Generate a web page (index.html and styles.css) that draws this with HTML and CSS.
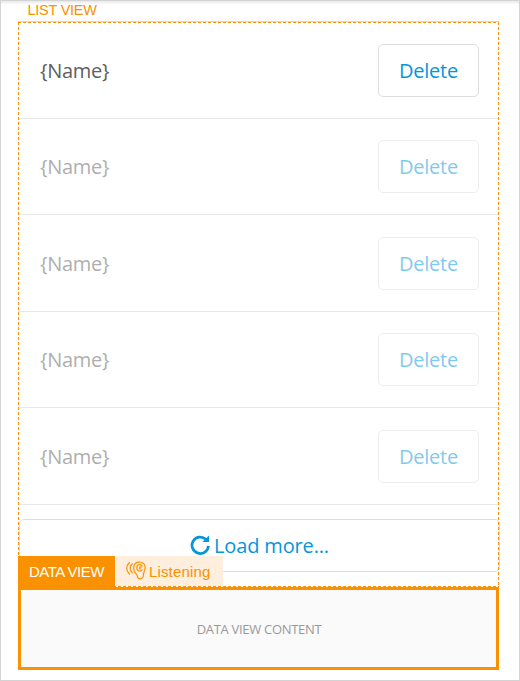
FILE: index.html
```html
<!DOCTYPE html>
<html lang="en">
<head>
<meta charset="utf-8">
<title>List view</title>
<link rel="stylesheet" href="styles.css">
</head>
<body>
<main class="canvas">
  <div class="list-label"><span>LIST VIEW</span></div>
  <section class="list-view">
    <div class="row"><span class="name">{Name}</span><button class="btn">Delete</button></div>
    <div class="row short faded"><span class="name">{Name}</span><button class="btn">Delete</button></div>
    <div class="row faded"><span class="name">{Name}</span><button class="btn">Delete</button></div>
    <div class="row short faded"><span class="name">{Name}</span><button class="btn">Delete</button></div>
    <div class="row faded"><span class="name">{Name}</span><button class="btn">Delete</button></div>
    <button class="btn load-more">
      <svg class="refresh" viewBox="0 0 20 20" width="20" height="20"><path d="M15.8 4.3A8.2 8.2 0 1 0 18.4 10.8" fill="none" stroke="#0595db" stroke-width="2.7"/><path d="M19 .6V7H12.4Z" fill="#0595db"/></svg>
      <span class="load-text">Load more...</span>
    </button>
    <svg class="outline" width="481" height="565" viewBox="0 0 481 565"><path d="M0 .5H481M.5 0V565M480.5 0V565M0 564.5H481" fill="none" stroke="#f99100" stroke-dasharray="3 2"/></svg>
  </section>
  <section class="data-view">
    <div class="tabs">
      <span class="tab">DATA VIEW</span>
      <span class="listening">
        <svg width="20" height="20" viewBox="0 0 20 20" fill="none" stroke="#f99100" stroke-width="1.2" stroke-linecap="round"><path d="M3.5 1.5C-.2 5-.2 9.5 3.5 13M6.3 2.7C3.5 5.3 3.5 9 6.3 11.8"/><path d="M8.2 4.2C10-.1 18.4.1 19.1 5.7C19.4 8.4 18.3 10.3 17.6 12.2C17.4 14.8 17.6 17.4 14.8 17.8C12.8 18.1 11.6 17 11.4 15.2C11.1 13.2 9.1 12.3 8.2 10C7.4 8 7.4 6 8.2 4.2"/><path d="M16.2 5C14.9 2.6 10.8 3.3 10.8 6.7C10.8 10.4 14.8 11 16.2 8.8M15.2 6C13.6 5.2 12.8 7.6 14.5 8"/></svg>
        <span class="listening-text">Listening</span>
      </span>
    </div>
    <div class="content"><span>DATA VIEW CONTENT</span></div>
  </section>
</main>
</body>
</html>
```
FILE: styles.css
```css
* { box-sizing: border-box; }
body { margin: 0; background: #fff; }
.canvas {
  height: 681px;
  padding: 0 20px 0 17px;
  border: 1px solid #d3d3d3;
  background: linear-gradient(#e9e9e9, #fff 4px);
  overflow: hidden;
  font-family: "Open Sans", sans-serif;
}
.list-label {
  height: 21px;
  padding-left: 9.5px;
  border-bottom: 1px solid #d6d6dc;
  font: 14.5px/19px "Liberation Sans", sans-serif;
  letter-spacing: -.25px;
  color: #f99100;
}
.list-view { position: relative; width: 481px; height: 565px; }
.row {
  display: flex;
  align-items: flex-start;
  justify-content: space-between;
  height: 97px;
  padding: 22px 20px 0 22px;
  border-bottom: 1px solid #e8e8e8;
}
.short { height: 96px; padding-top: 21px; }
.name { font-size: 20px; line-height: 53px; letter-spacing: -.3px; color: #606060; }
.btn {
  width: 101px;
  height: 53px;
  padding: 0;
  border: 1px solid #ddd;
  border-radius: 5px;
  background: #fff;
  font: 20px/51px "Open Sans", sans-serif;
  letter-spacing: -.25px;
  color: #0595db;
}
.faded .name, .faded .btn { opacity: .5; }
.load-more {
  display: flex;
  align-items: center;
  justify-content: center;
  gap: 4px;
  width: 481px;
  margin: 14px 0 0 1px;
  letter-spacing: -.15px;
}
.refresh { margin-top: -2px; }
.outline { position: absolute; left: 0; top: 0; }
.data-view {
  position: relative;
  width: 481px;
  height: 83px;
  border: 3px solid #f99100;
  background: #fafafa;
}
.tabs {
  position: absolute;
  left: -3px;
  top: -34px;
  display: flex;
  font: 15px/32px "Liberation Sans", sans-serif;
}
.tab { width: 97px; height: 31px; padding-left: 11px; background: #f99100; color: #fff; letter-spacing: -.5px; white-space: nowrap; }
.listening { display: flex; align-items: flex-start; gap: 3px; width: 108px; height: 30px; padding-left: 11px; background: #fdeedd; color: #f99100; }
.listening-text { letter-spacing: .15px; }
.listening svg { margin-top: 5px; }
.content { height: 100%; display: flex; align-items: center; justify-content: center; font-size: 13px; letter-spacing: -.3px; color: #999; }
.content span { padding-left: 1px; }
```
